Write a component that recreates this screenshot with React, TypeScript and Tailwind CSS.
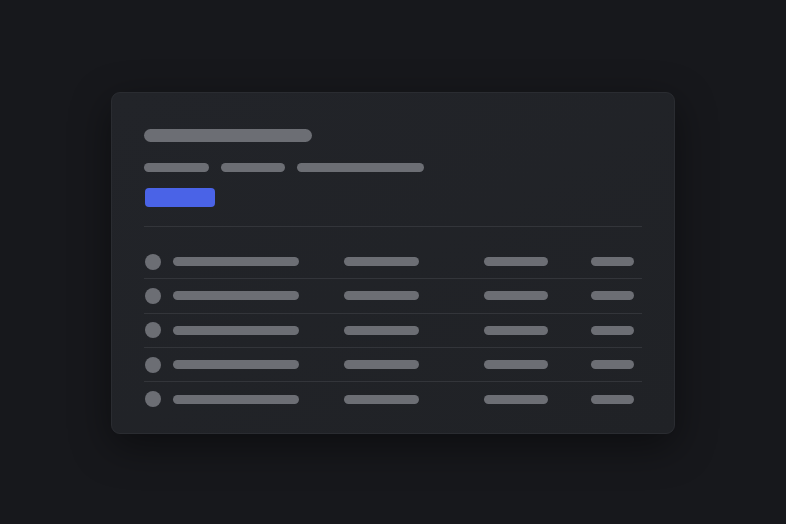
const rows = [0, 1, 2, 3, 4];

function Bar({ w }: { w: string }) {
  return <div className={`h-[9px] rounded-full bg-[#6c6e74] ${w}`} />;
}

export default function App() {
  return (
    <div className="flex h-[524px] w-[786px] items-start justify-center bg-[#17181c] pt-[92px] font-['Inter',sans-serif]">
      <div className="flex h-[342px] w-[564px] flex-col rounded-[9px] border border-[#2a2c31] bg-gradient-to-br from-[#222429] to-[#202226] px-[32px] pt-[36px] shadow-[0_12px_40px_rgba(0,0,0,0.45)]">
        {/* header */}
        <div className="h-[13px] w-[168px] rounded-full bg-[#6c6e74]" />
        <div className="mt-[21px] flex gap-[12px]">
          <Bar w="w-[65px]" />
          <Bar w="w-[64px]" />
          <Bar w="w-[127px]" />
        </div>
        <div className="ml-px mt-[16px] h-[19px] w-[70px] rounded-[4px] bg-[#4a63e7]" />
        <div className="mt-[19px] h-px w-full bg-[#33353a]" />

        {/* table */}
        <div className="mt-[18px] flex flex-col">
          {rows.map((r) => (
            <div
              key={r}
              className={`grid h-[34.3px] grid-cols-[200px_140px_107px_1fr] items-center ${
                r < rows.length - 1 ? 'border-b border-[#33353a]' : ''
              }`}
            >
              <div className="flex items-center gap-[12px] pl-px">
                <div className="h-[16px] w-[16px] rounded-full bg-[#6c6e74]" />
                <Bar w="w-[126px]" />
              </div>
              <Bar w="w-[75px]" />
              <Bar w="w-[64px]" />
              <Bar w="w-[43px]" />
            </div>
          ))}
        </div>
      </div>
    </div>
  );
}
